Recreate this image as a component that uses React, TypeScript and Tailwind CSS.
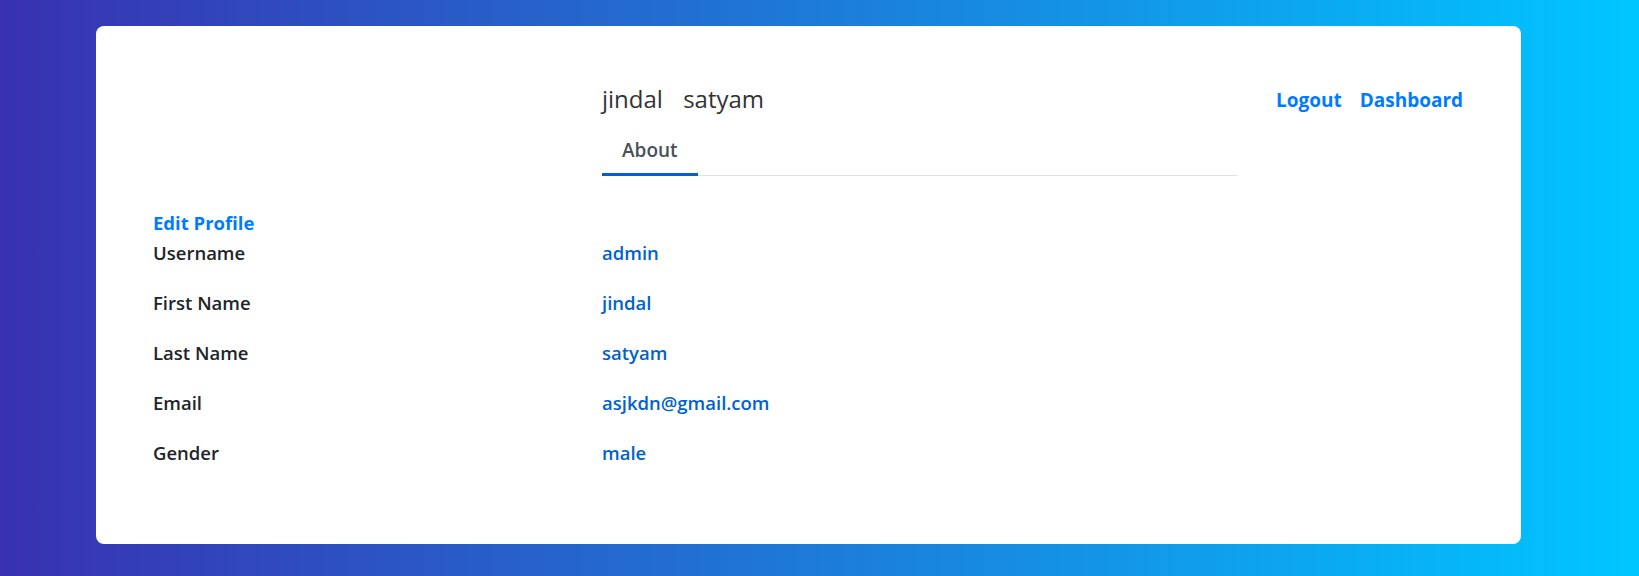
const profile = [
  { label: 'Username', value: 'admin' },
  { label: 'First Name', value: 'jindal' },
  { label: 'Last Name', value: 'satyam' },
  { label: 'Email', value: 'asjkdn@gmail.com' },
  { label: 'Gender', value: 'male' },
];

const App = () => {
  return (
    <div className="min-h-[576px] w-full bg-[linear-gradient(to_right,#3931af,#00c6ff)] pt-[26px] pl-[96px] font-['Open_Sans',sans-serif]">
      <div className="w-[1425px] h-[518px] bg-white rounded-lg pl-[57px] pt-[57px]">
        {/* Profile head */}
        <div className="flex">
          <div className="w-[449px] shrink-0" />
          <div className="w-[636px] shrink-0">
            <h5 className="h-[32px] leading-[32px] text-[24px] font-[500] text-[#333]">
              jindal <span className="ml-[14px]">satyam</span>
            </h5>
            <ul className="mt-[11px] flex border-b border-[#dee2e6]">
              <li className="-mb-px">
                <a className="block px-[20px] pt-[11px] pb-[10px] leading-[26px] text-[19px] font-semibold text-[#495057] border-b-[3px] border-[#0062cc]">
                  About
                </a>
              </li>
            </ul>
          </div>
          <div className="ml-[38px] flex gap-[18px] h-[34px] items-center">
            <a className="text-[19px] font-bold text-[#007bff]">Logout</a>
            <a className="text-[19px] font-bold text-[#007bff]">Dashboard</a>
          </div>
        </div>

        {/* Profile work + tab content */}
        <div className="mt-[33px]">
          <a className="block h-[28px] leading-[28px] text-[18.5px] font-bold text-[#007bff]">Edit Profile</a>
          <div className="mt-[-9px]">
            {profile.map((row) => (
              <div key={row.label} className="flex h-[50px] items-center">
                <label className="w-[449px] shrink-0 text-[18.5px] font-semibold text-[#212529]">{row.label}</label>
                <p className="text-[18.5px] font-semibold text-[#0062cc]">{row.value}</p>
              </div>
            ))}
          </div>
        </div>
      </div>
    </div>
  );
};

export default App;
